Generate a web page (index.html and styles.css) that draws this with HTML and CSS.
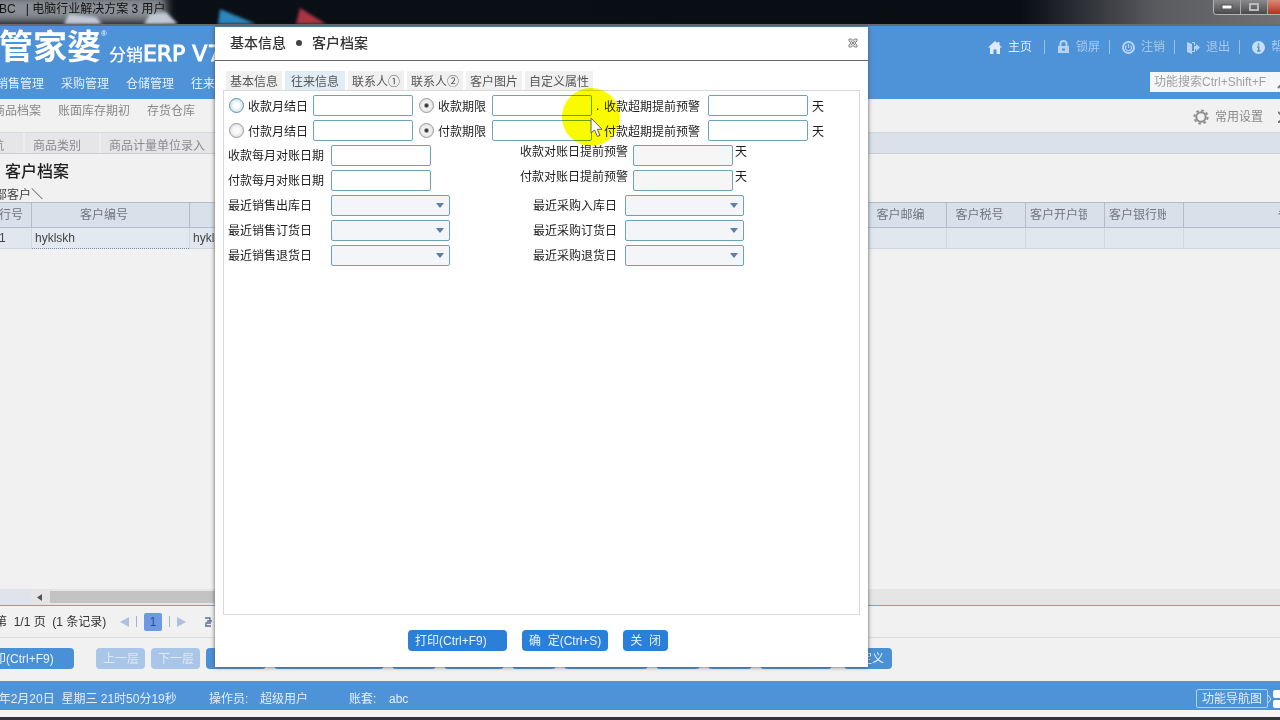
FILE: index.html
```html
<!DOCTYPE html>
<html lang="zh-CN">
<head>
<meta charset="utf-8">
<title>客户档案</title>
<link rel="stylesheet" href="styles.css">
</head>
<body>
<div class="app">
  <div class="titlebar">
    <svg class="desktop" width="420" height="24" viewBox="0 0 420 24" aria-hidden="true">
      <defs><filter id="soft"><feGaussianBlur stdDeviation="5"/></filter><filter id="blur"><feGaussianBlur stdDeviation="1.5"/></filter></defs>
      <rect x="0" y="-4" width="206" height="26" fill="#8b8f95" filter="url(#soft)"/>
      <path d="M104 24L109 14L136 17L142 24Z M184 24L190 14L206 12L218 24Z" fill="#c0c8d4" filter="url(#blur)"/>
      <path d="M258 24L260 9L296 24Z" fill="#2b86bd" filter="url(#blur)"/>
      <path d="M336 24L340 8L366 24Z" fill="#a93442" filter="url(#blur)"/>
    </svg>
    <span class="caption">ABC &nbsp; | 电脑行业解决方案 3 用户</span>
    <div class="winbtns">
      <button aria-label="最小化"><svg width="12" height="6"><rect x="1" y="1" width="10" height="4" fill="#fff" stroke="#555"/></svg></button>
      <button aria-label="最大化"><svg width="12" height="9"><rect x="2" y="1" width="8" height="6" fill="none" stroke="#bbb" stroke-width="2"/></svg></button>
      <button class="winclose" aria-label="关闭窗口"></button>
    </div>
  </div>

  <header class="header">
    <div class="brandrow">
      <div class="brand"><strong>管家婆</strong><sup>®</sup><span class="product">分销<span class="latin">ERP V7</span></span></div>
      <ul class="quick">
        <li><svg width="14" height="13" viewBox="0 0 14 13"><path d="M7 0L0 6.500H2V13H5.500V8.500H8.500V13H12V6.500H14L11.500 4V1H9.500V2.300Z" fill="#dfeaf7"/></svg><a href="#" class="strong">主页</a></li>
        <li><svg width="13" height="14" viewBox="0 0 13 14"><path d="M3.500 6V4a3 3 0 0 1 6 0V6" fill="none" stroke="#b9d3ef" stroke-width="2"/><path d="M1 6H12V13H1Z" fill="#b9d3ef"/><path d="M5 9.500H8" stroke="#4e92d7" stroke-width="2"/></svg><a href="#">锁屏</a></li>
        <li><svg width="13" height="13" viewBox="0 0 13 13"><circle cx="6.500" cy="6.500" r="5.500" fill="none" stroke="#b9d3ef" stroke-width="2"/><path d="M4.500 4.500a3 3 0 1 0 4 0M6.500 3V7" fill="none" stroke="#b9d3ef" stroke-width="1.200"/></svg><a href="#">注销</a></li>
        <li><svg width="13" height="13" viewBox="0 0 13 13"><path d="M0 1L5 3V13L0 11ZM5 1H8V4H7V2H5Z M7 5H9V3L13 6.500L9 10V8H8V11H5V10H7Z" fill="#b9d3ef"/></svg><a href="#">退出</a></li>
        <li><svg width="13" height="13" viewBox="0 0 13 13"><circle cx="6.500" cy="6.500" r="6.500" fill="#c9def4"/><path d="M6.500 2.500V4.500M5 6H6.700V10M5 10H8.500" fill="none" stroke="#4e92d7" stroke-width="1.500"/></svg><a href="#">帮助</a></li>
      </ul>
    </div>
    <div class="menurow">
      <nav class="menu"><a href="#">销售管理</a><a href="#">采购管理</a><a href="#">仓储管理</a><a href="#">往来管理</a></nav>
      <div class="search"><input type="text" aria-label="功能搜索" placeholder="功能搜索Ctrl+Shift+F"><svg width="14" height="14" viewBox="0 0 14 14"><circle cx="8.500" cy="5.500" r="4" fill="none" stroke="#777" stroke-width="1.500"/><path d="M5.500 8.500L1 13" stroke="#777" stroke-width="2"/></svg></div>
    </div>
  </header>

  <div class="subnav">
    <nav class="menu"><a href="#">商品档案</a><a href="#">账面库存期初</a><a href="#">存货仓库</a></nav>
    <div class="settings">
      <svg width="16" height="16" viewBox="0 0 16 16"><circle cx="8" cy="8" r="4.700" fill="none" stroke="#8d8d8d" stroke-width="2"/><circle cx="8" cy="8" r="6.600" fill="none" stroke="#8d8d8d" stroke-width="2" stroke-dasharray="2.600 2.580"/></svg>
      <a href="#">常用设置</a>
      <svg class="tools" width="14" height="14" viewBox="0 0 14 14"><path d="M0 2L12 13M12 2L1 12M0 12H4" stroke="#777" stroke-width="2"/></svg>
    </div>
  </div>

  <div class="pagetabs"><a href="#">导航</a><a href="#">商品类别</a><a href="#">商品计量单位录入</a></div>

  <main class="page">
    <h1>客户档案</h1>
    <p class="path">全部客户＼</p>
    <table class="grid">
      <colgroup><col class="c-no"><col class="c-id"><col class="c-id"><col class="c-mid"><col class="c-mid"><col class="c-mid"><col class="c-mid"><col class="c-mid"><col class="c-s"><col class="c-s"><col class="c-s"><col class="c-s"><col></colgroup>
      <thead><tr><th class="first">行号</th><th><div>客户编号</div></th><th></th><th></th><th></th><th></th><th></th><th></th><th><div>客户邮编</div></th><th><div>客户税号</div></th><th><div class="cut">客户开户银行</div></th><th><div class="cut">客户银行账号</div></th><th class="last">备注</th></tr></thead>
      <tbody><tr><td class="first">1</td><td class="picked">hyklskh</td><td>hyklskh</td><td></td><td></td><td></td><td></td><td></td><td></td><td></td><td></td><td></td><td></td></tr></tbody>
    </table>
  </main>

  <div class="hscroll"><span class="corner"></span><svg width="5" height="7"><path d="M5 0V7L0 3.500Z" fill="#555"/></svg><span class="thumb"></span></div>

  <div class="pager">
    <span class="count">第 &nbsp;1/1 页 &nbsp;(1 条记录)</span>
    <button aria-label="上一页"><svg width="9" height="10"><path d="M9 0V10L0 5Z" fill="#aebfe0"/></svg></button>
    <i></i>
    <button class="current">1</button>
    <i></i>
    <button aria-label="下一页"><svg width="9" height="10"><path d="M0 0V10L9 5Z" fill="#aebfe0"/></svg></button>
    <button class="reload" aria-label="刷新"><svg width="9" height="10" viewBox="0 0 9 10"><path d="M1 1H6V4M3 4H8M1 9H7M2 9V6H7" fill="none" stroke="#5e6f95" stroke-width="1.300"/></svg></button>
  </div>

  <div class="actions">
    <button class="btn wide">打印(Ctrl+F9)</button>
    <button class="btn off" disabled>上一层</button>
    <button class="btn off" disabled>下一层</button>
    <span class="rest"><span class="btn w60"></span><span class="btn w110"></span><span class="btn w44"></span><span class="btn w60"></span><span class="btn w44"></span><span class="btn w84"></span><span class="btn w44"></span><span class="btn w44"></span><span class="btn w72"></span><button class="btn custom">自定义</button></span>
  </div>

  <footer class="status">
    <span class="date">2019年2月20日&nbsp; 星期三 21时50分19秒</span>
    <span class="user">操作员:</span><span class="name">超级用户</span>
    <span class="books">账套:</span><span>abc</span>
    <button class="navmap">功能导航图</button>
    <svg width="24" height="18" viewBox="0 0 24 18"><path d="M0 5L3 9L0 13" fill="none" stroke="#cfe3f6"/><rect x="5" y="0" width="9" height="8" rx="2" fill="#fff"/><rect x="5" y="10" width="9" height="8" rx="2" fill="#fff"/><rect x="15" y="0" width="9" height="8" rx="2" fill="#fff"/><rect x="15" y="10" width="9" height="8" rx="2" fill="#fff"/></svg>
  </footer>
  <div class="frame"></div>
</div>

<section class="dialog" role="dialog" aria-labelledby="dlg-title">
  <div class="dlg-head">
    <h2 id="dlg-title"><span>基本信息</span><i class="dot"></i><span>客户档案</span></h2>
    <button class="close" aria-label="关闭"><svg width="10" height="10" viewBox="0 0 10 10"><path d="M1 1H3.500L5 2.500L6.500 1H9V3L7 5L9 7V9H6.500L5 7.500L3.500 9H1V7L3 5L1 3Z" fill="#ddd" stroke="#888"/><path d="M3 3L7 7M7 3L3 7" stroke="#888"/></svg></button>
  </div>
  <div class="tabs">
    <button>基本信息</button><button class="active">往来信息</button><button>联系人①</button><button>联系人②</button><button>客户图片</button><button>自定义属性</button>
  </div>
  <form class="panel">
    <div class="row">
      <input type="radio" name="recv" id="r1" class="hot"><label class="choice long" for="r1">收款月结日</label><input type="text" aria-label="收款月结日">
      <input type="radio" name="recv" id="r2" class="second" checked><label class="choice short" for="r2">收款期限</label><input type="text" aria-label="收款期限">
      <span class="mark">.</span><label class="warn" for="w1">收款超期提前预警</label><input type="text" id="w1"><span class="unit">天</span>
    </div>
    <div class="row">
      <input type="radio" name="pay" id="p1"><label class="choice long" for="p1">付款月结日</label><input type="text" aria-label="付款月结日">
      <input type="radio" name="pay" id="p2" class="second" checked><label class="choice short" for="p2">付款期限</label><input type="text" aria-label="付款期限">
      <span class="mark"></span><label class="warn" for="w2">付款超期提前预警</label><input type="text" id="w2"><span class="unit">天</span>
    </div>
    <div class="row">
      <label class="lead" for="d1">收款每月对账日期</label><input type="text" id="d1">
      <label class="side high" for="d2">收款对账日提前预警</label><input type="text" id="d2" class="dim"><span class="unit high">天</span>
    </div>
    <div class="row">
      <label class="lead" for="d3">付款每月对账日期</label><input type="text" id="d3">
      <label class="side high" for="d4">付款对账日提前预警</label><input type="text" id="d4" class="dim"><span class="unit high">天</span>
    </div>
    <div class="row"><label class="lead" for="s1">最近销售出库日</label><select id="s1"></select><label class="right" for="s2">最近采购入库日</label><select id="s2"></select></div>
    <div class="row"><label class="lead" for="s3">最近销售订货日</label><select id="s3"></select><label class="right" for="s4">最近采购订货日</label><select id="s4"></select></div>
    <div class="row"><label class="lead" for="s5">最近销售退货日</label><select id="s5"></select><label class="right" for="s6">最近采购退货日</label><select id="s6"></select></div>
  </form>
  <div class="dlg-foot">
    <button class="btn wide">打印(Ctrl+F9)</button>
    <button class="btn">确&nbsp; 定(Ctrl+S)</button>
    <button class="btn">关&nbsp; 闭</button>
  </div>
  <span class="halo"></span>
  <svg class="cursor" width="14" height="21" viewBox="0 0 14 21"><path d="M1 1V16L4.500 13L7.500 19.500L10 18.300L7.300 12.300H12Z" fill="#fff" stroke="#665f4a"/></svg>
</section>
</body>
</html>
```
FILE: styles.css
```css
* { box-sizing: border-box; }
body {
  margin: 0;
  overflow: hidden;
  position: relative;
  font: 12px/16px "Liberation Sans", "Noto Sans CJK SC", sans-serif;
  color: #333;
}
button, input, select { font: inherit; color: inherit; margin: 0; }
button { border: 0; background: none; padding: 0; white-space: nowrap; }
a { color: inherit; text-decoration: none; }
svg { display: block; flex: none; }

/* The window is wider than the screen and runs off it on both sides. */
.app {
  display: flex;
  flex-direction: column;
  height: 100vh;
  width: calc(100% + 80px);
  margin-left: -40px;
  background: #f1f1f1;
  white-space: nowrap;
}

.titlebar {
  height: 26px;
  flex: none;
  display: flex;
  justify-content: space-between;
  position: relative;
  padding: 1px 0 0 31px;
  background: linear-gradient(90deg, #0b0f16 0%, #090d14 78%, #5a5b5f 88%, #77787b 100%);
  border-bottom: 2px solid #6d6a6c;
  color: #111;
}
.desktop { position: absolute; left: 0; top: 0; }
.caption { position: relative; }
.winbtns {
  display: flex;
  height: 15px;
  margin-top: -1px;
  border: 1px solid #b5b5b5;
  border-top: 0;
  border-radius: 0 0 4px 4px;
  overflow: hidden;
}
.winbtns button {
  width: 27px;
  display: grid;
  place-items: center;
  background: linear-gradient(#8a8a8c, #4a4a4d);
  border-right: 1px solid #aaa;
}
.winbtns .winclose { width: 51px; background: linear-gradient(#d88a78, #b5301c); }

.header { flex: none; height: 73px; background: #4e92d7; color: #e6f0fb; }
.brandrow { display: flex; justify-content: space-between; height: 44px; }
.brand { display: flex; align-items: flex-start; padding-left: 39px; color: #fff; }
.brand strong { font-size: 34px; line-height: 42px; }
.brand sup { font-size: 8px; line-height: 12px; padding-top: 2px; }
.product { font-size: 17px; line-height: 24px; padding: 16px 0 0 2px; font-weight: 500; }
.latin { font-family: "DejaVu Sans", sans-serif; font-size: 22px; -webkit-text-stroke: 1px #fff; }
.quick { display: flex; align-items: center; list-style: none; margin: 0; padding: 0 25px 2px 0; color: #a9c9ec; }
.quick li { display: flex; align-items: center; gap: 6px; padding: 0 9px 0 12px; border-left: 1px solid #9bc0e8; height: 14px; }
.quick li:first-child { border: 0; padding-right: 12px; }
.quick li:last-child { padding-right: 0; }
.quick .strong { color: #e3eefa; }
.menurow { display: flex; justify-content: space-between; align-items: flex-start; height: 29px; }
.menu { display: flex; gap: 17px; }
.menurow .menu { padding: 6px 0 0 36px; }
.search { display: flex; align-items: center; width: 170px; height: 20px; margin-top: 2px; background: #f5f6f8; overflow: hidden; }
.search input { width: 127px; flex: none; height: 18px; border: 0; padding: 0 4px; background: none; outline: 0; }
.search input::placeholder { color: #a0a0a0; opacity: 1; }

.subnav { flex: none; display: flex; justify-content: space-between; height: 33px; padding: 4px 28px 0 33px; color: #888; }
.subnav .menu { align-items: flex-start; }
.settings { display: flex; gap: 6px; height: 28px; align-items: center; }
.settings .tools { margin-left: 9px; }

.pagetabs { flex: none; display: flex; height: 22px; background: #dae1e9; border-top: 1px solid #d2d8df; border-bottom: 1px solid #c9ced6; color: #8a8a90; }
.pagetabs a { background: #e6e6e8; border-right: 2px solid #eeeef0; padding: 5px 18px 0 8px; }
.pagetabs a:first-child { padding-left: 20px; padding-right: 19px; }
.pagetabs a:last-child { padding-right: 30px; }

.page { flex: 1; min-height: 0; }
h1 { margin: 0; padding: 6px 0 0 45px; font-size: 16px; line-height: 24px; font-weight: 500; color: #222; }
.path { margin: 0; padding: 4px 0 0 23px; line-height: 14px; color: #444; }
.grid { width: 100%; table-layout: fixed; border-collapse: collapse; color: #444; }
.c-no { width: 71px; }
.c-id { width: 158px; }
.c-mid { width: 104px; }
.c-s { width: 79px; }
.grid th { height: 25px; padding: 0; font-weight: 400; background: #d8e0e9; border: 1px solid #b3bdc9; color: #70757d; }
.grid th div { margin: 0 17px 0 4px; overflow: hidden; text-align: center; }
.grid th .cut { text-align: left; }
.grid td { height: 21px; padding: 0 3px; background: #e0e7ef; border: 1px solid #cfd7e0; }
.grid .first { text-align: left; padding: 0 0 0 38px; }
.grid .last { text-align: left; padding-left: 94px; }
.grid .picked { border: 1px dotted #6f8ba8; background: #e3e9f1; }

.hscroll { flex: none; display: flex; align-items: center; height: 17px; background: #e5e5e5; border-bottom: 1px solid #7da2c3; }
.corner { width: 71px; height: 100%; background: #dfe3ec; margin-right: 6px; }
.thumb { width: 400px; height: 12px; background: #c3c3c3; margin-left: 8px; }

.pager { flex: none; display: flex; align-items: center; height: 32px; padding-left: 35px; border-bottom: 1px solid #dcdcdc; }
.count { width: 125px; }
.pager i { width: 1px; height: 11px; margin: 0 7px; background: #a9b3c6; }
.pager .current { width: 18px; height: 18px; border-radius: 2px; background: #6c98e4; color: #33517f; }
.reload { margin-left: 18px; }

.actions { flex: none; display: flex; align-items: flex-start; gap: 6px; height: 43px; padding: 10px 0 0 15px; }
.btn { display: inline-block; flex: none; height: 21px; padding: 0 7px; border-radius: 4px; background: #4a90d6; color: #e8f2fc; }
.btn.wide { width: 99px; text-align: left; }
.actions .wide { margin-right: 16px; }
.btn.off { width: 49px; background: #a9c6e8; color: #dfeaf7; }
.rest { display: flex; gap: 8px; }
.w60 { width: 60px; }
.w110 { width: 110px; }
.w44 { width: 44px; }
.w72 { width: 72px; }
.w84 { width: 84px; }
.btn.custom { width: 48px; padding: 0 4px; margin-left: 4px; text-align: left; }

.status { flex: none; display: flex; align-items: center; height: 29px; padding: 6px 28px 0 12px; background: #4e92d7; color: #e3effb; }
.date { width: 237px; }
.user { width: 51px; }
.name { width: 89px; }
.books { width: 40px; }
.navmap { margin-left: auto; padding: 0 5px; height: 19px; border: 1px solid #a8d3ee; border-radius: 2px; }
.frame { flex: none; height: 10px; background: #f4f4f4; border-bottom: 3px solid #34353a; }

.dialog {
  position: absolute;
  left: 215px;
  top: 27px;
  width: 51%;
  height: calc(100% - 80px);
  display: flex;
  flex-direction: column;
  background: #fff;
  box-shadow: 0 0 4px #555;
  color: #1c1c1c;
  white-space: nowrap;
}
.dlg-head { display: flex; align-items: center; justify-content: space-between; height: 34px; padding: 0 10px 2px 15px; border-bottom: 1px solid #666; }
.dlg-head h2 { display: flex; align-items: center; gap: 10px; margin: 0; font-size: 14px; line-height: 20px; font-weight: 500; color: #333; }
.dot { width: 6px; height: 6px; border-radius: 50%; background: #444; }
.tabs { display: flex; gap: 3px; padding: 10px 0 0 11px; }
.tabs button { height: 19px; padding: 3px 4px 0; background: #f0f0f0; color: #555; }
.tabs .active { padding: 3px 6px 0; background: #e1edf5; }
.panel { flex: 1; display: flex; flex-direction: column; gap: 4px; margin: 0 8px; padding: 4px; border: 1px solid #d6d9dc; }
.row { display: flex; align-items: center; height: 21px; }
.row input[type="text"], .row select { height: 21px; border: 1px solid #6ba3b8; border-radius: 2px; background: #fff; outline: 0; }
.row input[type="text"] { width: 100px; flex: none; }
.row input.dim { background: #f6f6f7; }
.row select {
  appearance: none;
  width: 119px;
  background: #f4f5f8 url("data:image/svg+xml,%3Csvg xmlns='http://www.w3.org/2000/svg' width='8' height='5'%3E%3Cpath d='M0 0H8L4 5Z' fill='%235f7ea6'/%3E%3C/svg%3E") no-repeat right 5px center;
}
.row input[type="radio"] {
  appearance: none;
  flex: none;
  width: 15px;
  height: 15px;
  margin-left: 1px;
  border: 1px solid #999;
  border-radius: 50%;
  background: radial-gradient(#fafafa 30%, #d4d4d4);
}
.row input.hot { border-color: #5f93a8; background: radial-gradient(#fafdff 30%, #b5d3de); }
.row input.second { margin-left: 6px; }
.row input[type="radio"]:checked { background: radial-gradient(#333 0 1px, #f4f4f4 3px, #d8d8d8); }
.choice { padding: 2px 0 0 4px; }
.long { width: 69px; }
.short { width: 58px; }
.mark { width: 12px; padding-left: 4px; }
.warn { width: 104px; padding-top: 2px; }
.unit { padding: 2px 0 0 4px; }
.lead { width: 103px; padding-top: 1px; }
.side { width: 202px; padding-right: 5px; text-align: right; }
.right { width: 175px; padding: 1px 8px 0 0; text-align: right; }
.row .high { align-self: flex-start; padding-top: 0; line-height: 15px; }
.row .unit.high { padding-left: 2px; }
.dlg-foot { display: flex; gap: 15px; height: 52px; padding: 15px 0 0 193px; }
.dlg-foot .btn { background: #2a80d9; }
.halo { position: absolute; left: 347px; top: 61px; width: 58px; height: 58px; border-radius: 50%; background: #fbfb00; mix-blend-mode: multiply; pointer-events: none; }
.cursor { position: absolute; left: 375px; top: 90px; }
```
